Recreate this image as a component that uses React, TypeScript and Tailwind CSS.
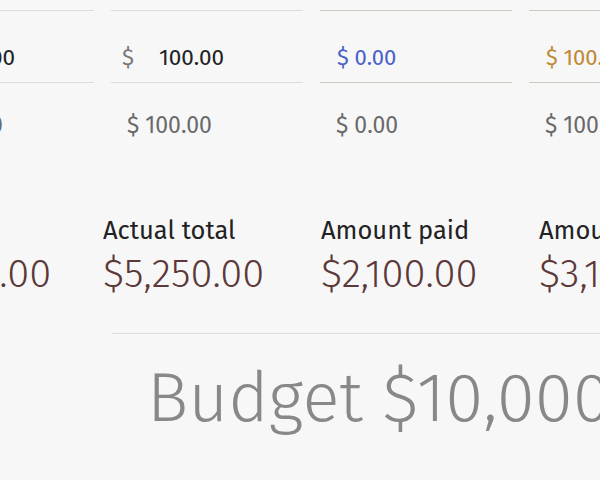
import React from "react";

const font = { fontFamily: '"Fira Sans", "Open Sans", "Noto Sans", sans-serif' };

type InputCol = {
  kind: "input" | "link" | "pending";
  value: string;
  hint: string;
};

const inputCols: InputCol[] = [
  { kind: "input", value: "100.00", hint: "$ 100.00" },
  { kind: "input", value: "100.00", hint: "$ 100.00" },
  { kind: "link", value: "$ 0.00", hint: "$ 0.00" },
  { kind: "pending", value: "$ 100.00", hint: "$ 100.00" },
];

const totals = [
  { label: "Estimate", value: "$5,000.00" },
  { label: "Actual total", value: "$5,250.00" },
  { label: "Amount paid", value: "$2,100.00" },
  { label: "Amount due", value: "$3,150.00" },
];

function InputCell({ col }: { col: InputCol }) {
  const warm = col.kind !== "input";
  const line = warm ? "border-[#cfcabf]" : "border-[#dcdcdc]";
  return (
    <div className="w-[192px] shrink-0">
      <div className={`h-[11px] border-b ${line}`} />
      <div className={`flex h-[72px] items-end border-b pb-[10px] ${line}`}>
        {col.kind === "input" ? (
          <div className="flex h-[28px] items-center text-[22.5px] leading-[28px]">
            <span className="ml-[11px] text-[#7a7a7a]">$</span>
            <span className="ml-[25px] text-[#222]">{col.value}</span>
          </div>
        ) : (
          <span
            className={`ml-[17px] text-[22px] leading-[28px] ${
              col.kind === "link" ? "text-[#4a62c9]" : "text-[#c08935]"
            }`}
          >
            {col.value}
          </span>
        )}
      </div>
      <div className="mt-[28px] pl-[16px] text-[23px] leading-[28px] text-[#6a6a6a]">{col.hint}</div>
    </div>
  );
}

export default function App() {
  return (
    <div className="h-[480px] w-[600px] overflow-hidden bg-[#f7f7f8]" style={font}>
      <div className="ml-[-98px] flex gap-[17px]">
        {inputCols.map((c, i) => (
          <InputCell key={i} col={c} />
        ))}
      </div>

      <div className="mt-[76px] ml-[-115px] flex gap-[18px]">
        {totals.map((t) => (
          <div key={t.label} className="w-[200px] shrink-0">
            <p className="text-[25.5px] leading-[32px] text-[#222]">{t.label}</p>
            <p className="mt-[5px] whitespace-nowrap text-[40px] font-light leading-[44px] text-[#5c3838]">
              {t.value}
            </p>
          </div>
        ))}
      </div>

      <div className="mt-[37px] ml-[112px] border-t border-[#dcdcdc]">
        <p className="mt-[24px] whitespace-nowrap pl-[35px] text-[69px] font-light leading-[80px] text-[#888]">
          Budget $10,000.00
        </p>
      </div>
    </div>
  );
}
